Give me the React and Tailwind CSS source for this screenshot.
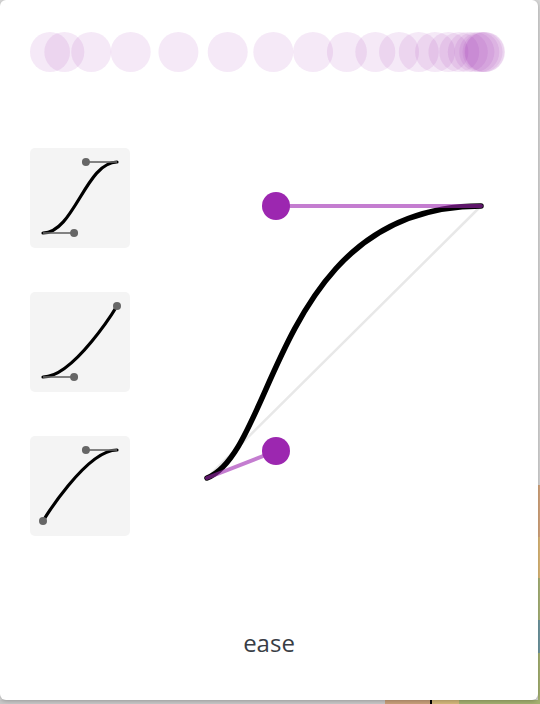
import React from 'react';

const PURPLE = '#9c27b0';

// solve cubic-bezier timing: progress at time t
function bezierAt(p1x, p1y, p2x, p2y, t) {
  const bx = (s) => 3 * (1 - s) * (1 - s) * s * p1x + 3 * (1 - s) * s * s * p2x + s * s * s;
  const by = (s) => 3 * (1 - s) * (1 - s) * s * p1y + 3 * (1 - s) * s * s * p2y + s * s * s;
  let lo = 0, hi = 1, s = t;
  for (let i = 0; i < 40; i++) {
    s = (lo + hi) / 2;
    if (bx(s) < t) lo = s; else hi = s;
  }
  return by(s);
}

const EASINGS = [
  { name: 'ease-in-out', p: [0.42, 0, 0.58, 1] },
  { name: 'ease-in', p: [0.42, 0, 1, 1] },
  { name: 'ease-out', p: [0, 0, 0.58, 1] },
];

function Thumb({ p }) {
  const [p1x, p1y, p2x, p2y] = p;
  const X = (v) => 13 + v * 74;
  const Y = (v) => 85 - v * 71;
  const s = [X(0), Y(0)], e = [X(1), Y(1)];
  const c1 = [X(p1x), Y(p1y)], c2 = [X(p2x), Y(p2y)];
  return (
    <div className="w-[100px] h-[100px] bg-[#f4f4f4] rounded-[5px]">
      <svg width="100" height="100">
        <path d={`M${s[0]} ${s[1]} C${c1[0]} ${c1[1]} ${c2[0]} ${c2[1]} ${e[0]} ${e[1]}`} fill="none" stroke="#000" strokeWidth="3.2" strokeLinecap="round" />
        <line x1={s[0]} y1={s[1]} x2={c1[0]} y2={c1[1]} stroke="#666" strokeWidth="1.6" />
        <line x1={e[0]} y1={e[1]} x2={c2[0]} y2={c2[1]} stroke="#666" strokeWidth="1.6" />
        <circle cx={c1[0]} cy={c1[1]} r="4" fill="#666" />
        <circle cx={c2[0]} cy={c2[1]} r="4" fill="#666" />
      </svg>
    </div>
  );
}

function Dots() {
  const steps = Array.from({ length: 21 }, (_, i) => i / 20);
  return (
    <svg width="538" height="44">
      {steps.map((t, i) => (
        <circle key={i} cx={50 + 435 * bezierAt(0.25, 0.1, 0.25, 1, t)} cy="22" r="20" fill={PURPLE} fillOpacity="0.1" />
      ))}
    </svg>
  );
}

function MainCurve() {
  // svg origin at page (180,148)
  const s = [27, 330], e = [301, 58];
  const c1 = [96, 303], c2 = [96, 58];
  return (
    <svg width="330" height="388" className="ml-[50px]">
      <line x1={s[0]} y1={s[1]} x2={e[0]} y2={e[1]} stroke="#e8e8e8" strokeWidth="2.5" />
      <path d={`M${s[0]} ${s[1]} C${c1[0]} ${c1[1]} ${c2[0]} ${c2[1]} ${e[0]} ${e[1]}`} fill="none" stroke="#000" strokeWidth="5.5" strokeLinecap="round" />
      <line x1={s[0]} y1={s[1]} x2={c1[0]} y2={c1[1]} stroke={PURPLE} strokeOpacity="0.6" strokeWidth="4" strokeLinecap="round" />
      <line x1={e[0]} y1={e[1]} x2={c2[0]} y2={c2[1]} stroke={PURPLE} strokeOpacity="0.6" strokeWidth="4" strokeLinecap="round" />
      <circle cx={c1[0]} cy={c1[1]} r="14" fill={PURPLE} />
      <circle cx={c2[0]} cy={c2[1]} r="14" fill={PURPLE} />
    </svg>
  );
}

export default function App() {
  return (
    <div className="w-[540px] h-[704px] overflow-hidden bg-[#d8d8d8] flex flex-col" style={{ fontFamily: '"Open Sans", "Liberation Sans", sans-serif' }}>
      <div className="flex h-[700px]">
        <div className="w-[538px] h-[700px] bg-white rounded-[6px] shadow-[0_1px_4px_rgba(0,0,0,0.25)] relative z-10 flex flex-col">
          <div className="pt-[30px]">
            <Dots />
          </div>
          <div className="flex items-start mt-[74px] pl-[30px]">
            <div className="flex flex-col gap-[44px]">
              {EASINGS.map((e) => <Thumb key={e.name} p={e.p} />)}
            </div>
            <MainCurve />
          </div>
          <div className="mt-[91px] text-center text-[24px] leading-8 text-[#383d45]">ease</div>
        </div>
        <div className="flex flex-col w-[2px]">
          <div className="h-[485px] bg-[#d6d6d6]" />
          <div className="h-[52px] bg-[#d4a57c]" />
          <div className="h-[41px] bg-[#dcb877]" />
          <div className="h-[42px] bg-[#a7b377]" />
          <div className="h-[33px] bg-[#6f97a0]" />
          <div className="flex-1 bg-[#a4b070]" />
        </div>
      </div>
      <div className="flex h-[4px]">
        <div className="w-[385px] bg-[#c8c8c8]" />
        <div className="w-[45px] bg-[#c9a07a]" />
        <div className="w-[2px] bg-black" />
        <div className="w-[27px] bg-[#d4b87a]" />
        <div className="flex-1 bg-[#a4b070]" />
      </div>
    </div>
  );
}
